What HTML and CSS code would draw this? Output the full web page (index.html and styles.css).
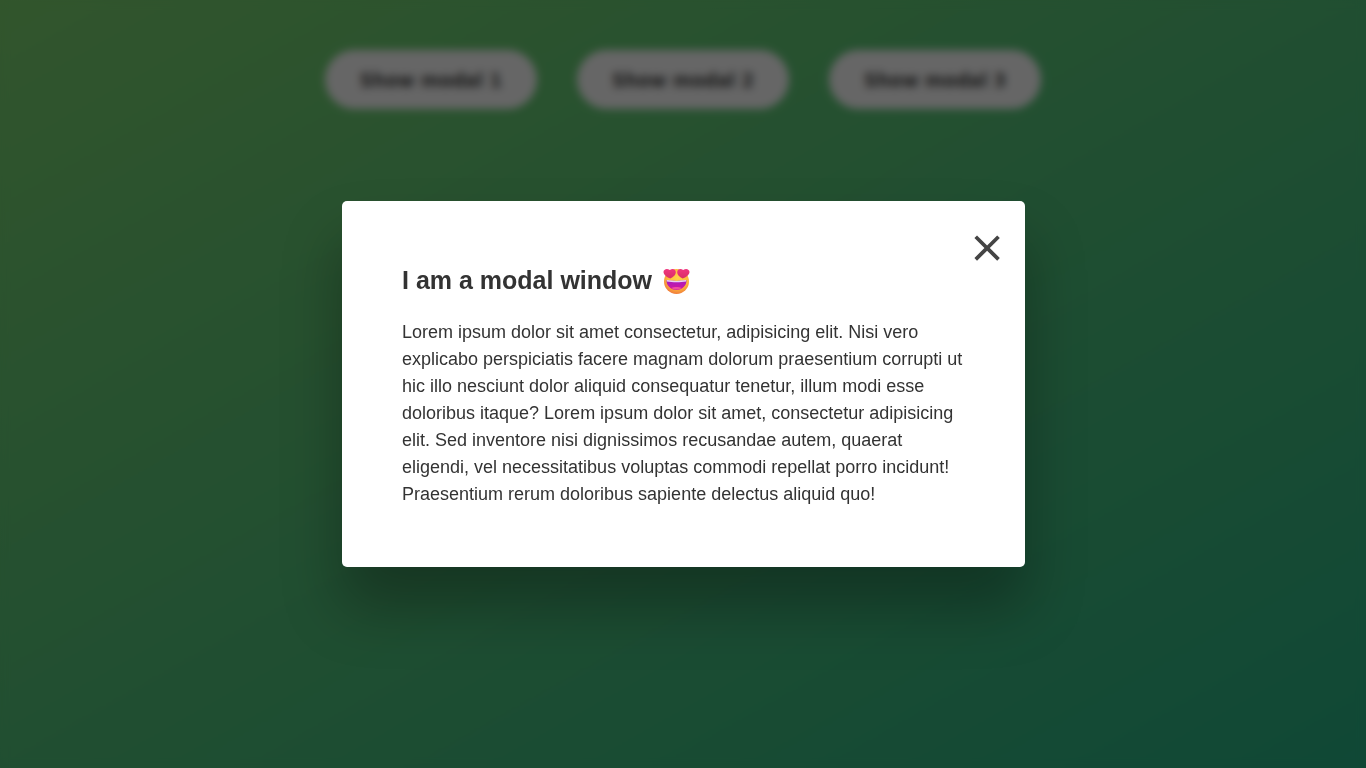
FILE: index.html
```html
<!DOCTYPE html>
<html lang="en">
<head>
<meta charset="utf-8">
<title>Modal window</title>
<link rel="stylesheet" href="styles.css">
</head>
<body>
<button class="show-modal">Show modal 1</button>
<button class="show-modal">Show modal 2</button>
<button class="show-modal">Show modal 3</button>
<div class="overlay"></div>
<div class="modal">
  <button class="close-modal">&times;</button>
  <h1 class="modal-title">I am a modal window
    <svg class="emoji" viewBox="0 0 27 26" aria-label="smiling face with heart-eyes">
      <defs>
        <radialGradient id="face" cx="0.55" cy="0.35" r="0.7">
          <stop offset="0" stop-color="#ffd54a"/>
          <stop offset="0.6" stop-color="#fdb93c"/>
          <stop offset="1" stop-color="#ee6f3a"/>
        </radialGradient>
        <linearGradient id="heart" x1="0" y1="0" x2="0" y2="1">
          <stop offset="0" stop-color="#f0367f"/>
          <stop offset="1" stop-color="#d92f66"/>
        </linearGradient>
        <linearGradient id="mouth" x1="0" y1="0" x2="0" y2="1">
          <stop offset="0" stop-color="#a51cc0"/>
          <stop offset="1" stop-color="#d5179c"/>
        </linearGradient>
      </defs>
      <circle cx="13.5" cy="13.5" r="12.5" fill="url(#face)"/>
      <path d="M3.600 12C9.500 13.200 17.500 13.200 23.400 12C24 17.500 19 22 13.500 22C8 22 3 17.500 3.600 12Z" fill="url(#mouth)"/>
      <path d="M3.800 12.100C9.500 13.200 17.500 13.200 23.200 12.100L23.100 13.500C17.500 14.500 9.500 14.500 3.900 13.500Z" fill="#ead3f7"/>
      <path d="M8.500 20C11 18.800 16 18.800 18.500 20C16 22 11 22 8.500 20Z" fill="#ef4fa0"/>
      <path d="M7.200 10.500C4.200 9.300 0.500 7 0.500 4C0.500 1.300 3.900 -0.300 6.800 2C9.500 -0.100 12.800 1.200 12.800 4.200C12.800 7 9.800 9.300 7.200 10.500Z" fill="url(#heart)"/>
      <path d="M19.800 10.500C22.800 9.300 26.500 7 26.500 4C26.500 1.300 23.100 -0.300 20.200 2C17.500 -0.100 14.200 1.200 14.200 4.200C14.200 7 17.200 9.300 19.800 10.500Z" fill="url(#heart)"/>
    </svg>
  </h1>
  <p class="modal-text">Lorem ipsum dolor sit amet consectetur, adipisicing elit. Nisi vero explicabo perspiciatis facere magnam dolorum praesentium corrupti ut hic illo nesciunt dolor aliquid consequatur tenetur, illum modi esse doloribus itaque? Lorem ipsum dolor sit amet, consectetur adipisicing elit. Sed inventore nisi dignissimos recusandae autem, quaerat eligendi, vel necessitatibus voluptas commodi repellat porro incidunt! Praesentium rerum doloribus sapiente delectus aliquid quo!</p>
</div>
</body>
</html>
```
FILE: styles.css
```css
* {
  margin: 0;
  padding: 0;
  box-sizing: inherit;
}

html {
  box-sizing: border-box;
}

body {
  position: relative;
  display: flex;
  align-items: flex-start;
  justify-content: center;
  height: 100vh;
  overflow: hidden;
  font-family: "Liberation Sans", Arial, sans-serif;
  color: #333;
  line-height: 1.5;
  background: linear-gradient(to top left, #28b487, #7dd56f);
}

.show-modal {
  margin: 50px 20px;
  padding: 17.5px 35px;
  border: none;
  border-radius: 100px;
  font-family: "DejaVu Sans", sans-serif;
  font-stretch: condensed;
  font-size: 20px;
  font-weight: 600;
  color: #444;
  background-color: #fff;
}

.overlay {
  position: absolute;
  top: 0;
  left: 0;
  width: 100%;
  height: 100%;
  background-color: rgba(0, 0, 0, 0.6);
  backdrop-filter: blur(4px);
}

.modal {
  position: absolute;
  top: 201px;
  left: 342px;
  width: 683px;
  height: 366px;
  padding: 60px;
  border-radius: 5px;
  background-color: #fff;
  box-shadow: 0 40px 60px rgba(0, 0, 0, 0.3);
}

.close-modal {
  position: absolute;
  top: 19px;
  right: 19px;
  border: none;
  font-family: "DejaVu Sans", sans-serif;
  font-size: 45px;
  color: #444;
  background: none;
}

.modal-title {
  margin-bottom: 18.5px;
  font-size: 25px;
  line-height: 39px;
}

.emoji {
  display: inline-block;
  width: 27px;
  height: 26px;
  margin-left: 4px;
  vertical-align: -5px;
}

.modal-text {
  font-size: 18px;
}
```
